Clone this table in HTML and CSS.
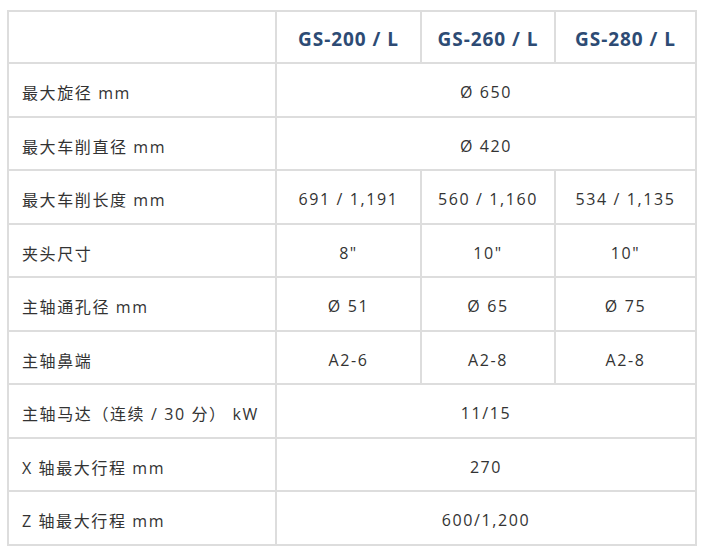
FILE: index.html
```html
<!DOCTYPE html>
<html lang="zh">
<head>
<meta charset="utf-8">
<link rel="stylesheet" href="styles.css">
</head>
<body>
<table class="spec">
  <colgroup>
    <col class="c-label"><col class="c-m1"><col class="c-m2"><col class="c-m3">
  </colgroup>
  <thead>
    <tr class="head">
      <th></th>
      <th>GS-200 / L</th>
      <th>GS-260 / L</th>
      <th>GS-280 / L</th>
    </tr>
  </thead>
  <tbody>
    <tr><td class="label">最大旋径 mm</td><td colspan="3">Ø 650</td></tr>
    <tr><td class="label">最大车削直径 mm</td><td colspan="3">Ø 420</td></tr>
    <tr><td class="label">最大车削长度 mm</td><td>691 / 1,191</td><td>560 / 1,160</td><td>534 / 1,135</td></tr>
    <tr><td class="label">夹头尺寸</td><td>8"</td><td>10"</td><td>10"</td></tr>
    <tr><td class="label">主轴通孔径 mm</td><td>Ø 51</td><td>Ø 65</td><td>Ø 75</td></tr>
    <tr><td class="label">主轴鼻端</td><td>A2-6</td><td>A2-8</td><td>A2-8</td></tr>
    <tr><td class="label">主轴马达（连续 / 30 分） kW</td><td colspan="3">11/15</td></tr>
    <tr><td class="label">X 轴最大行程 mm</td><td colspan="3">270</td></tr>
    <tr><td class="label">Z 轴最大行程 mm</td><td colspan="3">600/1,200</td></tr>
  </tbody>
</table>
</body>
</html>
```

FILE: styles.css
```css
html, body {
  margin: 0;
  background: #ffffff;
}
body {
  padding: 10px 8px 0 7px;
  font-family: "Open Sans", "Noto Sans CJK SC", sans-serif;
  color: #333333;
}
.spec {
  border-collapse: collapse;
  width: 688px;
  table-layout: fixed;
}
.c-label { width: 268px; }
.c-m1 { width: 145px; }
.c-m2 { width: 134px; }
.c-m3 { width: 141px; }
.spec th, .spec td {
  border: 2px solid #dddddd;
  text-align: center;
  padding: 5px 0 0 0;
  font-size: 16px;
  letter-spacing: 0.1em;
  height: 46.5px;
}
.spec th {
  font-size: 19px;
  font-weight: 700;
  color: #2d4b74;
  letter-spacing: 0.05em;
  padding-top: 4px;
}
.head th { height: 46px; }
.spec td.label {
  text-align: left;
  padding-left: 13px;
}
```
